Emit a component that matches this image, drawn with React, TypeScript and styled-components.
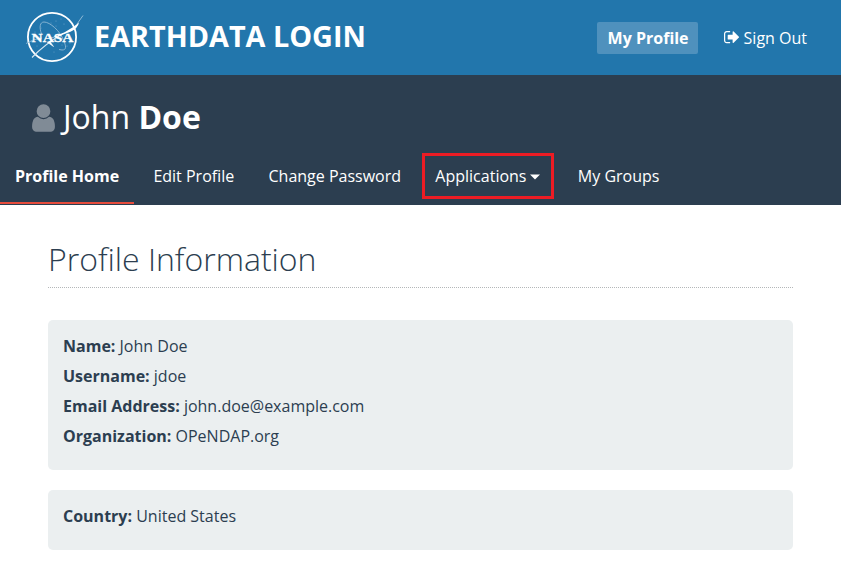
import React from "react";
import styled, { createGlobalStyle } from "styled-components";

const GlobalStyle = createGlobalStyle`
  * { box-sizing: border-box; }
  body {
    margin: 0;
    background: #fff;
    color: #2c3e50;
    font-family: "Open Sans", sans-serif;
    font-size: 16px;
    line-height: 30px;
    overflow: hidden;
  }
`;

const TopBar = styled.header`
  display: flex;
  align-items: center;
  height: 75px;
  padding: 0 34px 0 25px;
  background: #2276ac;
  color: #fff;
`;

const Logo = styled.svg`
  width: 60px;
  height: 56px;
  flex: none;
  margin-bottom: 1px;
`;

const SiteTitle = styled.h1`
  margin: 0 auto 4px 9px;
  font-size: 28.8px;
  font-weight: 700;
  line-height: 40px;
  white-space: nowrap;
`;

const ProfileButton = styled.a`
  width: 101px;
  height: 32px;
  margin-right: 26px;
  padding-left: 11px;
  border-radius: 2px;
  background: #4f91bd;
  font-weight: 700;
  line-height: 32px;
  white-space: nowrap;
`;

const SignOut = styled.a`
  display: flex;
  align-items: center;
  gap: 4px;
  line-height: 32px;
  white-space: nowrap;
`;

const SignOutIcon = styled.svg`
  width: 16px;
  height: 17px;
  fill: currentColor;
`;

const ProfileBar = styled.section`
  height: 130px;
  background: #2c3e50;
  color: #fff;
`;

const Person = styled.div`
  display: flex;
  align-items: center;
  height: 73px;
  padding: 11px 0 0 32px;
`;

const PersonIcon = styled.svg`
  width: 23px;
  height: 32px;
  margin: 1px 8px 0 0;
  fill: #808b96;
`;

const PersonName = styled.h2`
  margin: 0 0 1px;
  font-size: 32px;
  font-weight: 400;
  line-height: 44px;
`;

const Tabs = styled.nav`
  display: flex;
  height: 57px;
`;

const Tab = styled.a<{ $active?: boolean }>`
  height: 56px;
  padding: 13px 15px 0;
  margin-right: 4.3px;
  border-bottom: 2px solid ${(p) => (p.$active ? "#e74c3c" : "transparent")};
  font-weight: ${(p) => (p.$active ? 700 : 400)};
  white-space: nowrap;
`;

const MarkedTab = styled.a`
  display: flex;
  align-items: center;
  gap: 4px;
  width: 132px;
  height: 46px;
  margin: 5px 8.5px 0 2px;
  padding-left: 10px;
  border: 3px solid #ed1c24;
  white-space: nowrap;
`;

const Caret = styled.svg`
  width: 10px;
  height: 6px;
  margin-top: 2px;
  fill: currentColor;
`;

const Content = styled.main`
  padding: 32px 48px 0;
`;

const Heading = styled.h2`
  height: 51px;
  margin: 0 0 32px;
  border-bottom: 1px dotted #b4b7b9;
  font-size: 32px;
  font-weight: 300;
  line-height: 44px;
`;

const Panel = styled.div`
  margin-bottom: 20px;
  padding: 11px 15px 19px;
  border-radius: 5px;
  background: #ebeff0;
`;

const Field = styled.div`
  height: 30px;
  font-weight: 400;
`;

const Label = styled.b`
  font-weight: 700;
`;

const groups = [
  [
    ["Name:", "John Doe"],
    ["Username:", "jdoe"],
    ["Email Address:", "john.doe@example.com"],
    ["Organization:", "OPeNDAP.org"],
  ],
  [["Country:", "United States"]],
];

function NasaLogo() {
  return (
    <Logo viewBox="0 0 60 56">
      <circle cx="27" cy="28" r="24.1" fill="none" stroke="#fff" strokeWidth="1.8" />
      <g fill="none" stroke="#8fb9d5" strokeWidth="0.9">
        <path d="M16.5 25C14 18 15 13 19 13C25 13 35 22 38.5 31C41 37 42 41 37 41L34 40.5" />
        <path d="M1 34.5Q8 30 17 29" />
      </g>
      <path d="M52 15L58 6.5" stroke="#8fb9d5" strokeWidth="1" />
      <path d="M7 48.5Q20 35 38 24.5" stroke="#d5e5f0" strokeWidth="1.1" fill="none" />
      <path d="M24 29.5Q42 24 54 13.5Q53 19 46 22.5Q36 27 24 29.5Z" fill="#fff" />
      <path d="M22 33L28.5 37.5L24.5 32" stroke="#fff" strokeWidth="0.6" fill="#fff" />
      <g fill="#6fa6ca">
        <circle cx="31" cy="12" r=".6" /><circle cx="36" cy="10" r=".5" />
        <circle cx="26" cy="14" r=".5" /><circle cx="39" cy="15" r=".6" />
        <circle cx="31" cy="17" r=".5" /><circle cx="12" cy="37" r=".5" />
        <circle cx="16" cy="19" r=".5" /><circle cx="42" cy="37" r=".6" />
        <circle cx="45" cy="34" r=".6" /><circle cx="29" cy="43" r=".5" />
        <circle cx="37" cy="36" r=".5" /><circle cx="10" cy="23" r=".5" />
      </g>
      <text x="6.5" y="32.5" fill="#fff" stroke="#fff" strokeWidth="0.3" fontFamily="Liberation Serif, serif" fontSize="13.5" fontWeight="700" textLength="42" lengthAdjust="spacingAndGlyphs">NASA</text>
    </Logo>
  );
}

export default function App() {
  return (
    <>
      <GlobalStyle />
      <TopBar>
        <NasaLogo />
        <SiteTitle>EARTHDATA LOGIN</SiteTitle>
        <ProfileButton>My Profile</ProfileButton>
        <SignOut>
          <SignOutIcon viewBox="0 100 1664 1664">
            <path d="M640 1440q0 4 1 20t.5 26.5-3 23.5-10 19.5-20.5 6.5h-320q-119 0-203.5-84.5t-84.5-203.5v-704q0-119 84.5-203.5t203.5-84.5h320q13 0 22.5 9.5t9.5 22.5q0 4 1 20t.5 26.5-3 23.5-10 19.5-20.5 6.5h-320q-66 0-113 47t-47 113v704q0 66 47 113t113 47h312l11.5 1 11.5 3 8 5.5 7 9 2 13.5zm928-544q0 26-19 45l-544 544q-19 19-45 19t-45-19-19-45v-288h-448q-26 0-45-19t-19-45v-384q0-26 19-45t45-19h448v-288q0-26 19-45t45-19 45 19l544 544q19 19 19 45z" />
          </SignOutIcon>
          Sign Out
        </SignOut>
      </TopBar>
      <ProfileBar>
        <Person>
          <PersonIcon viewBox="0 0 1280 1792">
            <path d="M1280 1399q0 109-62.5 187t-150.5 78h-854q-88 0-150.5-78t-62.5-187q0-85 8.5-160.5t31.5-152 58.5-131 94-89 134.5-34.5q131 128 313 128t313-128q76 0 134.5 34.5t94 89 58.5 131 31.5 152 8.5 160.5zm-256-887q0 159-112.5 271.5t-271.5 112.5-271.5-112.5-112.5-271.5 112.5-271.5 271.5-112.5 271.5 112.5 112.5 271.5z" />
          </PersonIcon>
          <PersonName>
            John <Label>Doe</Label>
          </PersonName>
        </Person>
        <Tabs>
          <Tab $active>Profile Home</Tab>
          <Tab>Edit Profile</Tab>
          <Tab>Change Password</Tab>
          <MarkedTab>
            Applications
            <Caret viewBox="0 0 10 6">
              <path d="M0 .5h10L5 5.5z" />
            </Caret>
          </MarkedTab>
          <Tab>My Groups</Tab>
        </Tabs>
      </ProfileBar>
      <Content>
        <Heading>Profile Information</Heading>
        {groups.map((fields, i) => (
          <Panel key={i}>
            {fields.map(([label, value]) => (
              <Field key={label}>
                <Label>{label}</Label> {value}
              </Field>
            ))}
          </Panel>
        ))}
      </Content>
    </>
  );
}
